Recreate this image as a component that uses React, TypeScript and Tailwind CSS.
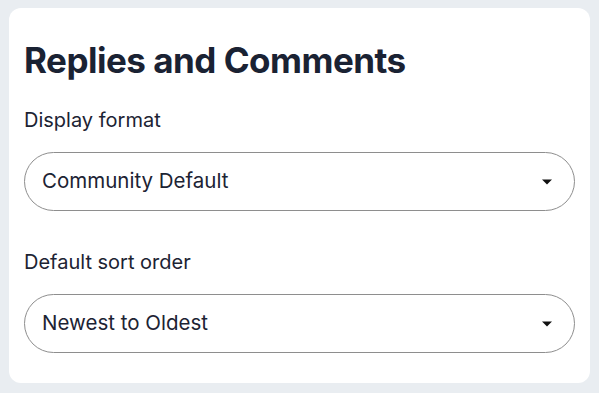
function Select({ value }: { value: string }) {
  return (
    <div className="flex h-[59px] items-center justify-between rounded-full border-[1.5px] border-[#8e8e8e] pl-[17px] pr-[21px]">
      <span className="text-[20.5px] text-[#1c2333]">{value}</span>
      <svg width="12" height="8" viewBox="0 0 12 8">
        <path d="M1 1.5h10L6 6.5z" fill="#111" />
      </svg>
    </div>
  );
}

export default function App() {
  return (
    <main
      className="h-[393px] bg-[#e9edf1] px-[9px] pt-[8px]"
      style={{ fontFamily: "Inter, 'Noto Sans', sans-serif" }}
    >
      <section className="rounded-xl bg-white px-[15px] pt-[32px] pb-[30px]">
        <h1 className="text-[35px] leading-[40px] font-bold tracking-[-0.5px] text-[#1a2233]">
          Replies and Comments
        </h1>
        <div className="mt-[27px] mb-[19px] text-[20px] leading-[26px] text-[#1c2333]">
          Display format
        </div>
        <Select value="Community Default" />
        <div className="mt-[38px] mb-[19px] text-[20px] leading-[26px] text-[#1c2333]">
          Default sort order
        </div>
        <Select value="Newest to Oldest" />
      </section>
    </main>
  );
}
